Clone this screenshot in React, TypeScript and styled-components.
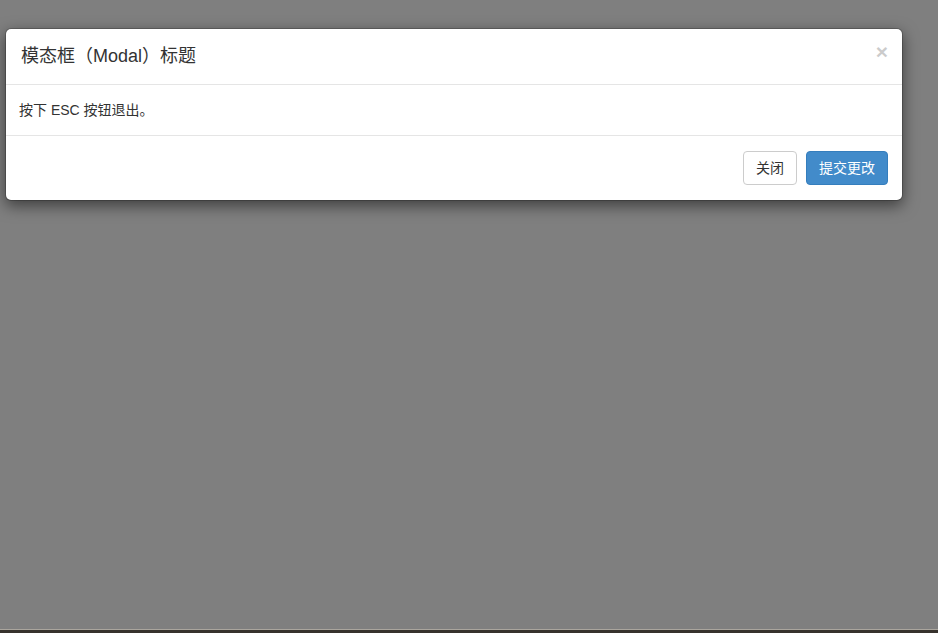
import React from "react";
import styled, { createGlobalStyle } from "styled-components";

const GlobalStyle = createGlobalStyle`
  html, body { margin: 0; padding: 0; }
  body {
    font-family: "Liberation Sans", Arial, "Noto Sans CJK SC", sans-serif;
    font-size: 14px;
    line-height: 1.42857143;
    color: #333;
    background: #7f7f7f;
  }
  * { box-sizing: border-box; }
`;

const Backdrop = styled.div`
  min-height: 100vh;
  background: #7f7f7f;
  display: flex;
  flex-direction: column;
  padding-top: 28px;
`;

const Dialog = styled.div`
  width: 898px;
  margin-left: 5px;
  background: #fff;
  border: 1px solid rgba(0, 0, 0, 0.2);
  border-radius: 6px;
  box-shadow: 0 5px 15px rgba(0, 0, 0, 0.5);
  background-clip: padding-box;
`;

const Header = styled.div`
  padding: 15px;
  height: 56px;
  border-bottom: 1px solid #e5e5e5;
  display: flex;
  align-items: flex-start;
  justify-content: space-between;
`;

const Title = styled.h4`
  margin: 0;
  font-size: 18px;
  font-weight: 400;
  line-height: 25px;
  color: #333;
`;

const Close = styled.button`
  padding: 0;
  margin-top: -3px;
  margin-right: -1px;
  background: transparent;
  border: 0;
  cursor: pointer;
  font-family: "Liberation Sans", Arial, sans-serif;
  font-size: 21px;
  font-weight: bold;
  line-height: 1;
  color: #000;
  text-shadow: 0 1px 0 #fff;
  opacity: 0.2;
`;

const Body = styled.div`
  padding: 15px 15px 15px 13px;
  line-height: 20px;
`;

const Footer = styled.div`
  padding: 15px 14px 15px 15px;
  border-top: 1px solid #e5e5e5;
  display: flex;
  justify-content: flex-end;
  gap: 9px;
`;

const Button = styled.button<{ $primary?: boolean }>`
  display: inline-block;
  padding: 6px 12px;
  font-family: "Liberation Sans", Arial, "Noto Sans CJK SC", sans-serif;
  font-size: 14px;
  font-weight: 400;
  line-height: 20px;
  height: 34px;
  border-radius: 4px;
  cursor: pointer;
  border: 1px solid ${(p) => (p.$primary ? "#357ebd" : "#ccc")};
  background: ${(p) => (p.$primary ? "#428bca" : "#fff")};
  color: ${(p) => (p.$primary ? "#fff" : "#333")};
`;

const BottomEdge = styled.div`
  margin-top: auto;
  height: 4px;
  border-top: 1px solid #aaa59d;
  background: #37322d;
`;

export default function App() {
  return (
    <>
      <GlobalStyle />
      <Backdrop>
        <Dialog>
          <Header>
            <Title>模态框（Modal）标题</Title>
            <Close aria-label="Close">×</Close>
          </Header>
          <Body>按下 ESC 按钮退出。</Body>
          <Footer>
            <Button>关闭</Button>
            <Button $primary>提交更改</Button>
          </Footer>
        </Dialog>
        <BottomEdge />
      </Backdrop>
    </>
  );
}
